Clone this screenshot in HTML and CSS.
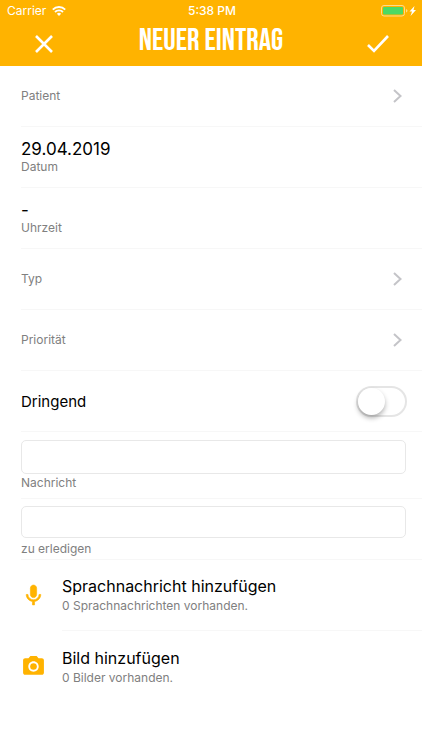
FILE: index.html
```
<!DOCTYPE html>
<html lang="de">
<head>
    <meta charset="UTF-8">
    <meta name="viewport" content="width=device-width, initial-scale=1.0">
    <title>Neuer Eintrag</title>
    <link rel="stylesheet" href="styles.css">
</head>
<body>
    <header class="header">
        <div class="status">
            <div class="status-left">
                <span>Carrier</span>
                <svg width="14" height="10" viewBox="0 0 14 10" fill="none" stroke="#fff" stroke-width="1.9">
                    <path d="M.8 3.6a8.8 8.8 0 0 1 12.4 0M3 6a5.7 5.7 0 0 1 8 0"/>
                    <path d="M7 10 4.9 7.8a3 3 0 0 1 4.2 0z" fill="#fff" stroke="none"/>
                </svg>
            </div>
            <span class="time">5:38 PM</span>
            <div class="status-right">
                <svg width="36" height="12" viewBox="0 0 36 12">
                    <rect x=".5" y=".5" width="23" height="10.5" rx="2.5" fill="none" stroke="#ffdc8a"/>
                    <rect x="2" y="2" width="20" height="7.5" rx="1" fill="#4cd964"/>
                    <path d="M25 4v3.5q1.5-.5 1.5-1.75T25 4z" fill="#ffdc8a"/>
                    <path d="m33.5 1-5 5.500h2.500L29.500 11l5.500-6h-2.500z" fill="#fff"/>
                </svg>
            </div>
        </div>
        <div class="navbar">
            <button class="nav-btn" type="button" aria-label="Abbrechen">
                <svg width="18" height="18" viewBox="0 0 18 18" fill="none" stroke="#fff" stroke-width="2.6"><path d="m1 1 16 16M17 1 1 17"/></svg>
            </button>
            <h1 class="title">NEUER EINTRAG</h1>
            <button class="nav-btn" type="submit" form="entry" aria-label="Speichern">
                <svg width="22" height="18" viewBox="0 0 22 18" fill="none" stroke="#fff" stroke-width="2.6"><path d="m1 10 6 6L21 1"/></svg>
            </button>
        </div>
    </header>

    <form class="form" id="entry">
        <button class="row" type="button">
            <span class="label">Patient</span>
            <svg class="chevron" width="9" height="14" viewBox="0 0 9 14"><path d="m1 1 6.500 6L1 13"/></svg>
        </button>
        <button class="row stacked" type="button">
            <span class="value">29.04.2019</span>
            <span class="label">Datum</span>
        </button>
        <button class="row stacked" type="button">
            <span class="value">-</span>
            <span class="label">Uhrzeit</span>
        </button>
        <button class="row" type="button">
            <span class="label">Typ</span>
            <svg class="chevron" width="9" height="14" viewBox="0 0 9 14"><path d="m1 1 6.500 6L1 13"/></svg>
        </button>
        <button class="row" type="button">
            <span class="label">Priorität</span>
            <svg class="chevron" width="9" height="14" viewBox="0 0 9 14"><path d="m1 1 6.500 6L1 13"/></svg>
        </button>
        <div class="row switch-row">
            <label class="switch-label" for="urgent">Dringend</label>
            <input class="switch" type="checkbox" id="urgent">
        </div>
        <div class="field">
            <input class="text tall" type="text" id="message">
            <label class="label" for="message">Nachricht</label>
        </div>
        <div class="field todo">
            <input class="text" type="text" id="todo">
            <label class="label" for="todo">zu erledigen</label>
        </div>
        <button class="media" type="button">
            <svg class="media-icon" viewBox="0 0 24 24"><path stroke="#ffb300" stroke-width=".6" d="M12 14c1.660 0 3-1.340 3-3V5c0-1.660-1.340-3-3-3S9 3.340 9 5v6c0 1.660 1.340 3 3 3zm5.300-3c0 3-2.540 5.100-5.300 5.100S6.700 14 6.700 11H5c0 3.410 2.720 6.230 6 6.720V21h2v-3.280c3.280-.48 6-3.300 6-6.720z"/></svg>
            <span class="media-text">
                <span class="value">Sprachnachricht hinzufügen</span>
                <span class="label">0 Sprachnachrichten vorhanden.</span>
            </span>
        </button>
        <button class="media" type="button">
            <svg class="media-icon" viewBox="0 0 24 24"><circle cx="12" cy="12" r="3.200"/><path d="M9 2 7.170 4H4c-1.100 0-2 .9-2 2v12c0 1.100.9 2 2 2h16c1.100 0 2-.9 2-2V6c0-1.100-.9-2-2-2h-3.170L15 2zm3 15c-2.760 0-5-2.240-5-5s2.240-5 5-5 5 2.240 5 5-2.240 5-5 5z"/></svg>
            <span class="media-text">
                <span class="value">Bild hinzufügen</span>
                <span class="label">0 Bilder vorhanden.</span>
            </span>
        </button>
    </form>
</body>
</html>
```
FILE: styles.css
```
* { box-sizing: border-box; }
body { margin: 0; background: #fff; color: #000; font-family: Inter, "Liberation Sans", sans-serif; }
button { margin: 0; padding: 0; border: none; background: none; color: inherit; font: inherit; text-align: left; cursor: pointer; }
svg { display: block; flex: none; }

.header { background: #ffb300; color: #fff; padding-bottom: 6px; }
.status { display: grid; grid-template-columns: 1fr auto 1fr; align-items: center; height: 22px; padding: 0 5px 0 7px; font-size: 12px; line-height: 22px; }
.status-left { display: flex; align-items: center; gap: 6px; }
.status-right { display: flex; justify-content: flex-end; }
.time { font-weight: 500; }
.navbar { display: flex; align-items: center; justify-content: space-between; height: 38px; padding: 0 32px; }
.nav-btn { display: flex; align-items: center; justify-content: center; width: 24px; height: 24px; margin-top: 6px; }
.title { margin: 0; font-family: "Bebas Neue", "Liberation Sans", sans-serif; font-size: 31px; font-weight: normal; line-height: 36px; }

.row { display: flex; align-items: center; justify-content: space-between; width: calc(100% - 21px); height: 61px; margin-left: 21px; padding-right: 20px; border-bottom: 1px solid #f7f7f7; }
.stacked { flex-direction: column; align-items: flex-start; justify-content: center; }
.value { font-size: 17px; line-height: 20px; }
.label { font-size: 12px; line-height: 16px; color: #808080; }
.chevron { fill: none; stroke: #c4c4c8; stroke-width: 2; }

.switch-row { padding-right: 15px; }
.switch-label { font-size: 15px; }
.switch { appearance: none; width: 51px; height: 31px; margin: 0; border: 2px solid #e5e5e5; border-radius: 16px; background: #fff; cursor: pointer; }
.switch::before { content: ""; display: block; width: 27px; height: 27px; border-radius: 50%; background: #fff; box-shadow: 0 3px 5px rgba(0,0,0,0.3); }
.switch:checked { background: #4cd964; border-color: #4cd964; }
.switch:checked::before { margin-left: 20px; }

.field { display: flex; flex-direction: column; gap: 1px; margin-left: 21px; padding: 8px 16px 7px 0; border-bottom: 1px solid #f7f7f7; }
.text { width: 100%; height: 32px; padding: 0 8px; border: 1px solid #e8e8e8; border-radius: 5px; background: #fff; font: inherit; font-size: 15px; outline: none; }
.tall { height: 34px; }
.todo { gap: 3px; padding-top: 7px; padding-bottom: 2px; }

.media { display: flex; align-items: center; width: 100%; height: 71px; padding-left: 21px; }
.media-icon { width: 25px; height: 25px; margin-right: 16px; fill: #ffb300; }
.media-text { display: flex; flex: 1; flex-direction: column; justify-content: center; height: 100%; gap: 2px; border-bottom: 1px solid #f7f7f7; }
.media-text .value { font-size: 16px; }
.media:last-child .media-text { border-bottom: none; }
```
